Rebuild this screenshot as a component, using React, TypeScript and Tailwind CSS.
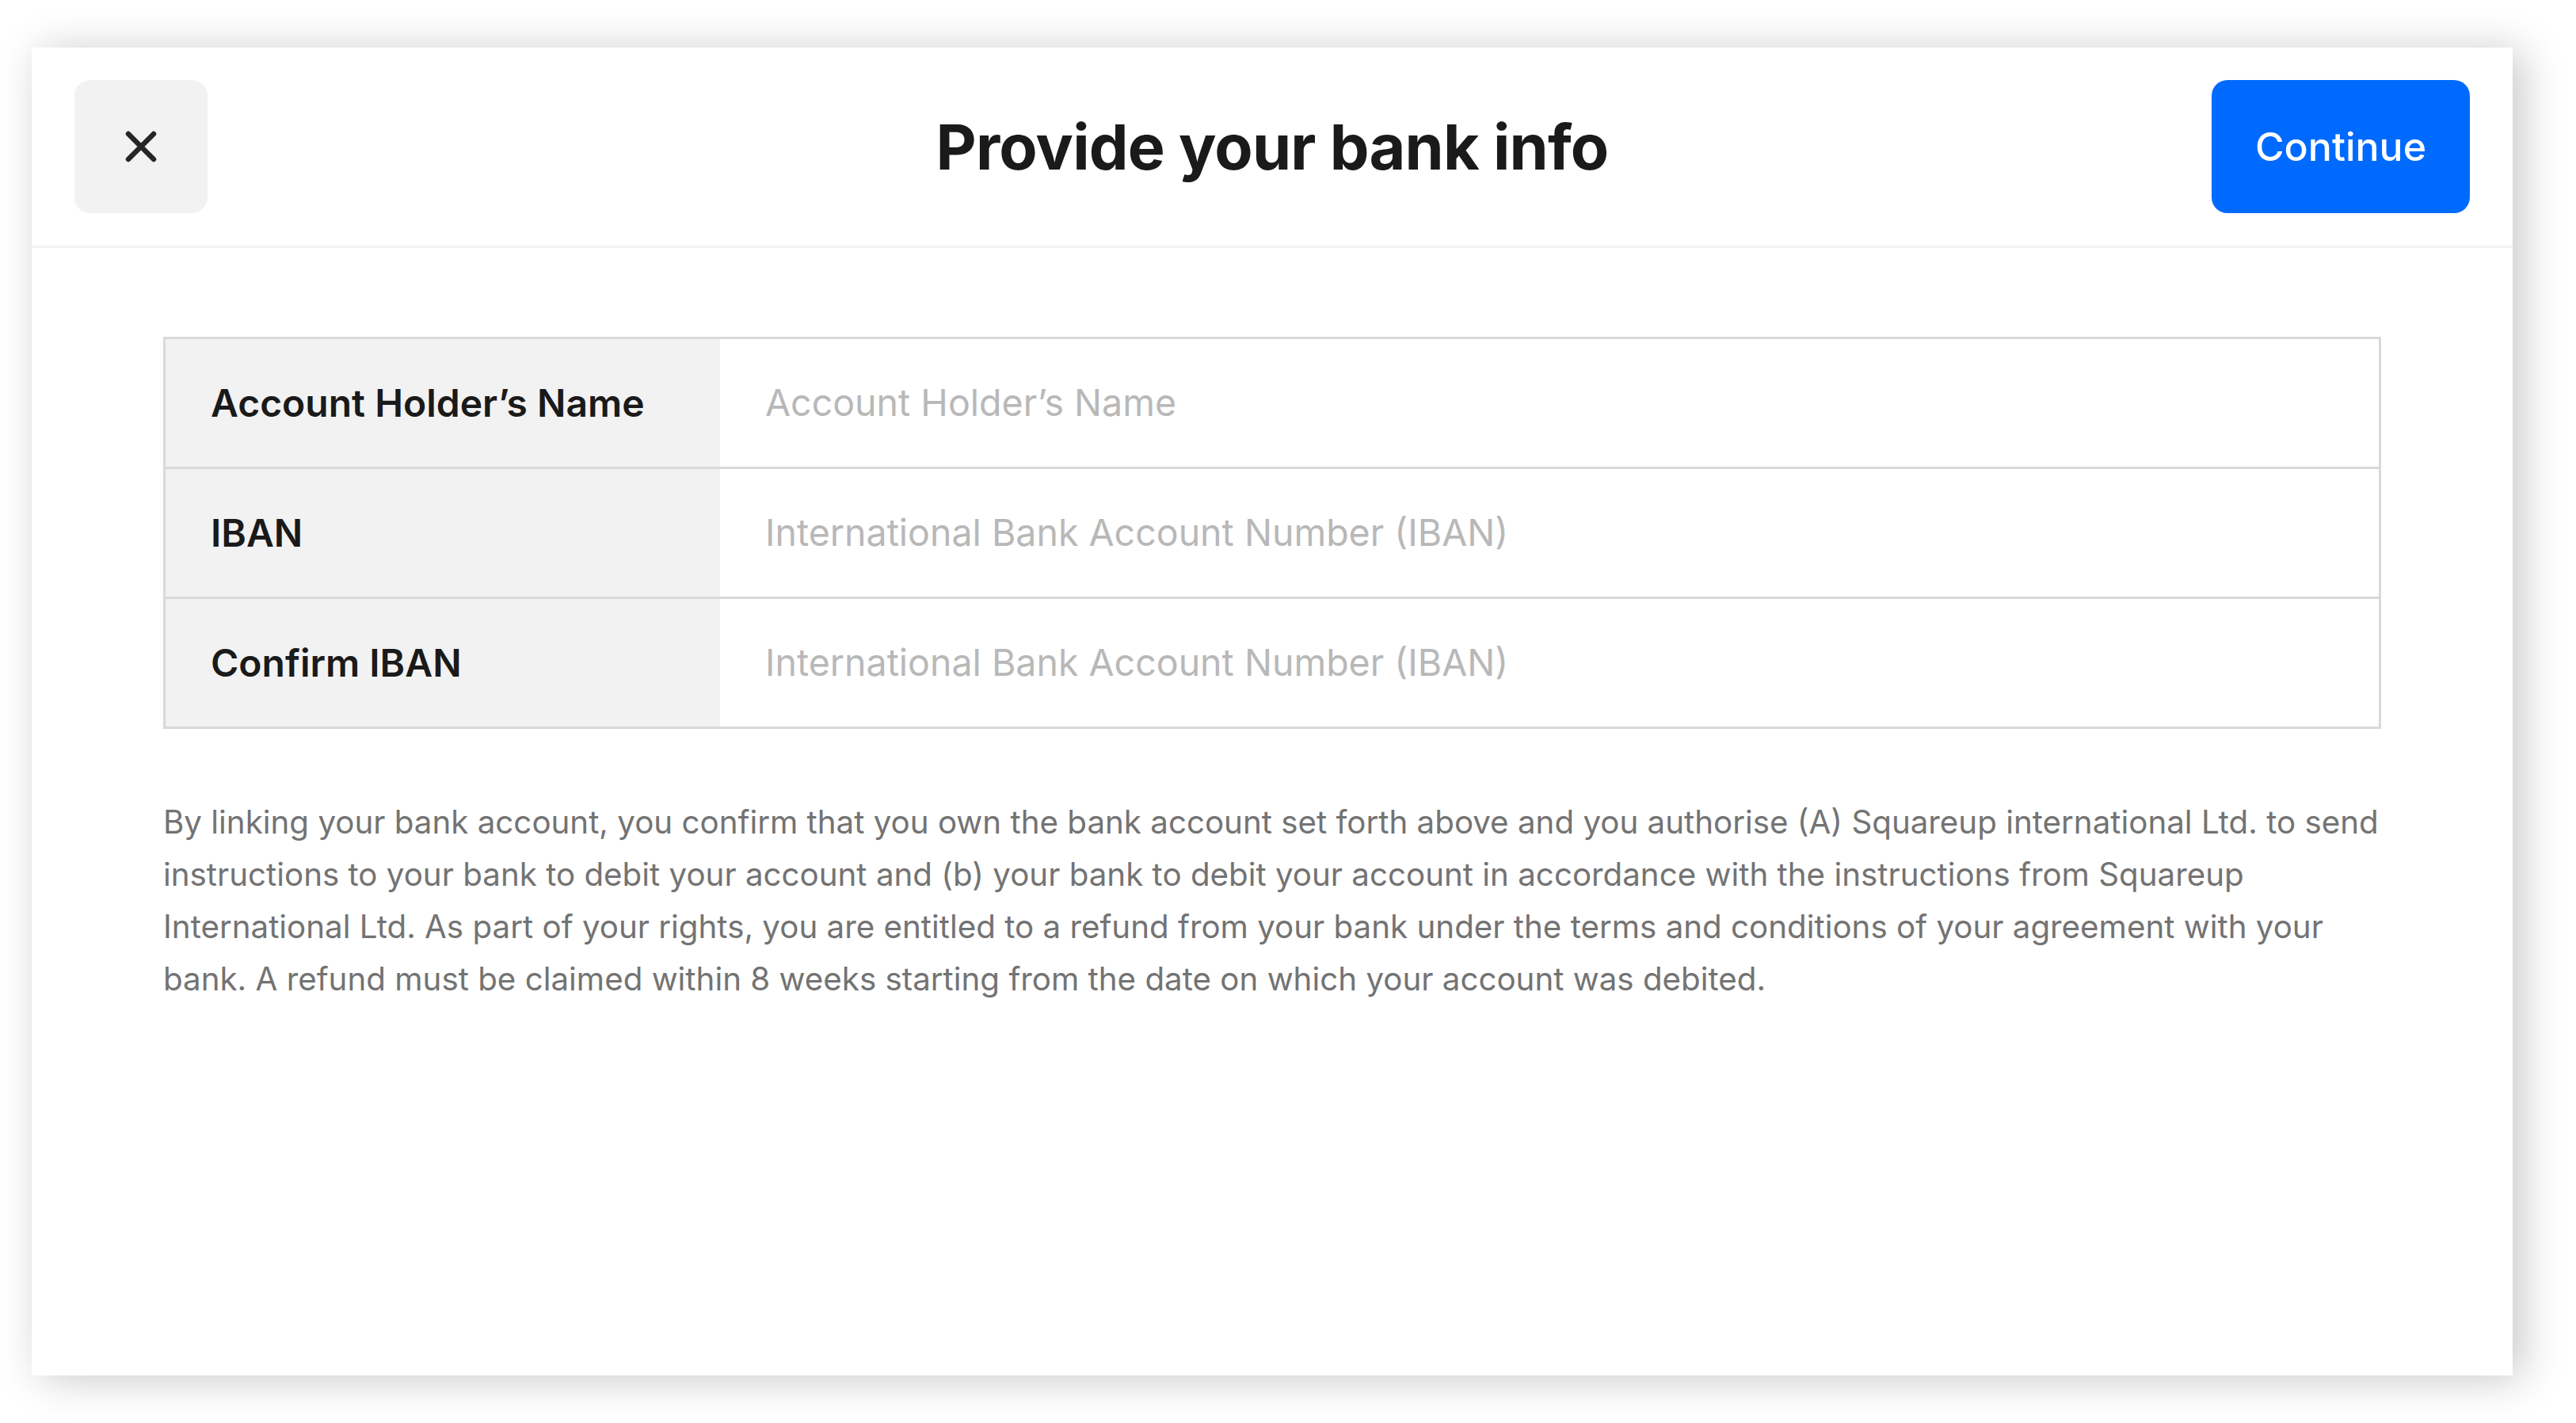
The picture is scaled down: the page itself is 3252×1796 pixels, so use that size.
const rows = [
  { label: 'Account Holder’s Name', placeholder: 'Account Holder’s Name' },
  { label: 'IBAN', placeholder: 'International Bank Account Number (IBAN)' },
  { label: 'Confirm IBAN', placeholder: 'International Bank Account Number (IBAN)' },
]

const disclaimer = [
  'By linking your bank account, you confirm that you own the bank account set forth above and you authorise (A) Squareup international Ltd. to send',
  'instructions to your bank to debit your account and (b) your bank to debit your account in accordance with the instructions from Squareup',
  'International Ltd. As part of your rights, you are entitled to a refund from your bank under the terms and conditions of your agreement with your',
  'bank. A refund must be claimed within 8 weeks starting from the date on which your account was debited.',
]

function CloseIcon() {
  return (
    <svg width="40" height="40" viewBox="0 0 40 40" fill="none" aria-hidden="true">
      <path d="M4 4L36 36M36 4L4 36" stroke="#262626" strokeWidth="6.5" strokeLinecap="round" />
    </svg>
  )
}

export default function App() {
  return (
    <div className="w-[3252px] h-[1796px] bg-white pt-[60px] pl-[40px] font-['Inter',sans-serif]">
      <div className="w-[3132px] h-[1676px] bg-white shadow-[12px_4px_50px_rgba(0,0,0,0.22)]">
        <header className="h-[253px] px-[54px] grid grid-cols-[1fr_auto_1fr] items-center border-b-[3px] border-[#f2f2f2]">
          <div>
            <button
              type="button"
              aria-label="Close"
              className="w-[168px] h-[168px] rounded-[20px] bg-[#f2f2f2] flex items-center justify-center"
            >
              <CloseIcon />
            </button>
          </div>
          <h1 className="text-[79px] font-bold text-[#1a1a1a] tracking-[-0.01em] leading-none">
            Provide your bank info
          </h1>
          <div className="flex justify-end">
            <button
              type="button"
              className="w-[326px] h-[168px] rounded-[20px] bg-[#006aff] text-white text-[50px] font-medium"
            >
              Continue
            </button>
          </div>
        </header>

        <div className="px-[166px] pt-[112px]">
          <div className="border-[3px] border-[#d9d9d9]">
            {rows.map((row, i) => (
              <div key={row.label + i} className={i > 0 ? 'border-t-[3px] border-[#d9d9d9]' : ''}>
                <div className="flex h-[161px]">
                  <div className="w-[700px] bg-[#f2f2f2] flex items-center pl-[57px] text-[48px] font-semibold text-[#1a1a1a]">
                    {row.label}
                  </div>
                  <div className="flex-1 flex items-center pl-[57px] text-[46.5px] text-[#b8b8b8]">
                    {row.placeholder}
                  </div>
                </div>
              </div>
            ))}
          </div>

          <p className="mt-[85px] text-[40.3px] leading-[66px] text-[#737373]">
            {disclaimer.map((line) => (
              <span key={line} className="block whitespace-nowrap">
                {line}
              </span>
            ))}
          </p>
        </div>
      </div>
    </div>
  )
}
